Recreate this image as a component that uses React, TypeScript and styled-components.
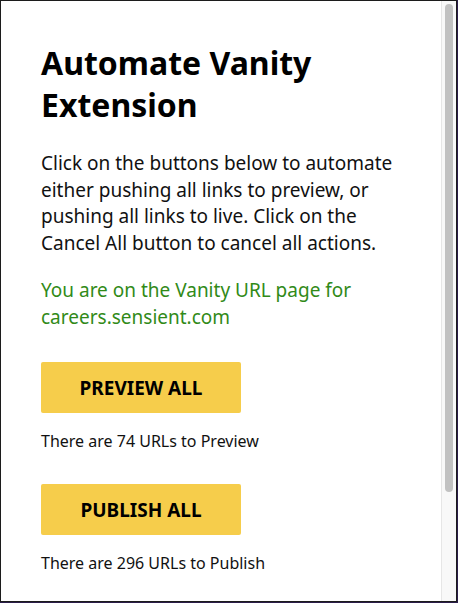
import React from 'react';
import styled, { createGlobalStyle } from 'styled-components';

const GlobalStyle = createGlobalStyle`
  html, body {
    margin: 0;
    padding: 0;
    background: #2b1d4a;
  }
  * {
    box-sizing: border-box;
  }
`;

const App: React.FC = () => {
  return (
    <>
      <GlobalStyle />
      <Popup>
        <Content>
          <Title>Automate Vanity Extension</Title>
          <Intro>
            Click on the buttons below to automate either pushing all links to preview, or
            pushing all links to live. Click on the Cancel All button to cancel all actions.
          </Intro>
          <PageNote>You are on the Vanity URL page for careers.sensient.com</PageNote>

          <ActionBlock>
            <ActionButton>PREVIEW ALL</ActionButton>
            <Count>There are 74 URLs to Preview</Count>
          </ActionBlock>
          <ActionBlock>
            <ActionButton>PUBLISH ALL</ActionButton>
            <Count>There are 296 URLs to Publish</Count>
          </ActionBlock>
        </Content>
        <ScrollTrack>
          <ScrollThumb />
        </ScrollTrack>
      </Popup>
    </>
  );
};

const Popup = styled.div`
  width: 457px;
  height: 602px;
  display: flex;
  background: #ffffff;
  border: 1px solid #1c1c1c;
  overflow: hidden;
`;

const Content = styled.div`
  flex: 1;
  min-width: 0;
  overflow: hidden;
  padding: 41px 30px 0 40px;
  font-family: 'Noto Sans', 'Open Sans', sans-serif;
  color: #111;
`;

const ScrollTrack = styled.div`
  width: 15px;
  flex-shrink: 0;
  padding: 3px 3px 0 3px;
  background: #f8f8f8;
  border-left: 1px solid #e6e6e6;
`;

const ScrollThumb = styled.div`
  width: 8px;
  height: 488px;
  border-radius: 4px;
  background: #c1c1c1;
`;

const Title = styled.h1`
  margin: 0 0 24px;
  font-size: 32px;
  line-height: 42px;
  font-weight: 700;
  color: #000;
`;

const Intro = styled.p`
  margin: 0 0 20px;
  font-size: 19px;
  line-height: 26.7px;
`;

const PageNote = styled.p`
  margin: 0 0 32px;
  font-size: 19px;
  line-height: 26.7px;
  color: #318a18;
`;

const ActionBlock = styled.div`
  display: flex;
  flex-direction: column;
  align-items: flex-start;
  gap: 17px;
  margin-bottom: 32px;
`;

const ActionButton = styled.button`
  width: 200px;
  height: 51px;
  border: none;
  border-radius: 2px;
  background: #f6cd4b;
  font-family: 'Noto Sans', 'Open Sans', sans-serif;
  font-size: 19px;
  font-weight: 700;
  color: #000;
  cursor: pointer;
`;

const Count = styled.div`
  font-size: 16px;
  line-height: 22px;
  color: #111;
`;

export default App;
